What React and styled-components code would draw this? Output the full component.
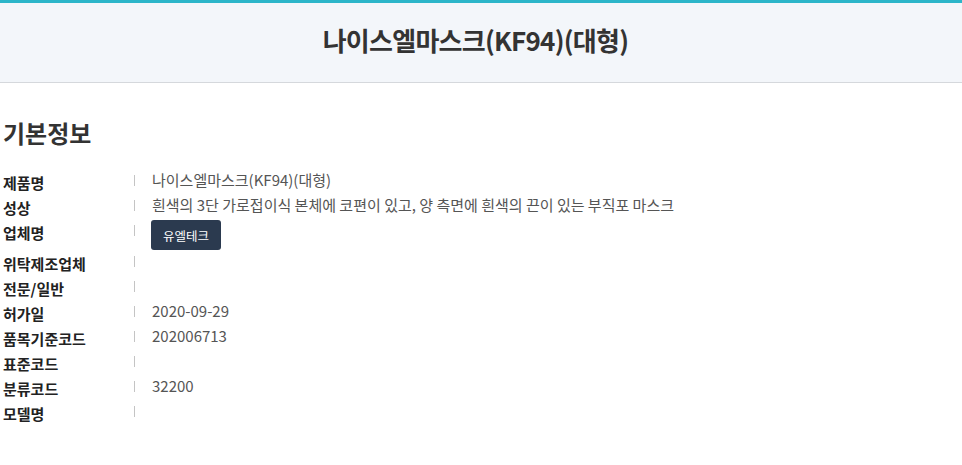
import React from "react"
import styled, { createGlobalStyle } from "styled-components"

const GlobalStyle = createGlobalStyle`
  body {
    margin: 0;
    background: #fff;
    font-family: "Noto Sans CJK KR", "Noto Sans", sans-serif;
    color: #333;
  }
`

const Header = styled.header`
  border-top: 3px solid #2cb5c9;
  border-bottom: 1px solid #d5d8dc;
  background: #f3f6fa;
  height: 78px;
  padding: 0 11px 1px 0;
  box-sizing: content-box;
  display: flex;
  align-items: center;
  justify-content: center;

  h1 {
    margin: 0 0 5px;
    font-size: 26px;
    font-weight: 700;
    letter-spacing: -0.75px;
    color: #333;
  }
`

const Content = styled.section`
  padding: 0 3px;

  h2 {
    margin: 33px 0 20px;
    font-size: 24px;
    font-weight: 700;
    color: #333;
    line-height: 34px;
  }
`

const Row = styled.div`
  display: flex;
  align-items: flex-start;
  height: ${p => (p.tall ? "31px" : "25px")};
`

const Label = styled.div`
  width: 131px;
  font-size: 15px;
  font-weight: 700;
  color: #222;
  line-height: 20px;
  padding-top: 3px;
`

const Sep = styled.span`
  width: 1px;
  height: 11px;
  margin-top: 5px;
  background: #c4c4c4;
`

const Value = styled.div`
  margin-left: 17px;
  font-size: 15px;
  color: #555;
  line-height: 20px;
`

const Company = styled.button`
  margin-left: 16px;
  height: 30px;
  padding: 0 12px;
  border: 0;
  border-radius: 3px;
  background: #2b3a4f;
  color: #fff;
  font-family: inherit;
  font-size: 12.5px;
  cursor: pointer;
`

const rows = [
  ["제품명", "나이스엘마스크(KF94)(대형)"],
  ["성상", "흰색의 3단 가로접이식 본체에 코편이 있고, 양 측면에 흰색의 끈이 있는 부직포 마스크"],
  ["업체명", null, "유엘테크"],
  ["위탁제조업체", ""],
  ["전문/일반", ""],
  ["허가일", "2020-09-29"],
  ["품목기준코드", "202006713"],
  ["표준코드", ""],
  ["분류코드", "32200"],
  ["모델명", ""],
]

export default function App() {
  return (
    <>
      <GlobalStyle />
      <Header>
        <h1>나이스엘마스크(KF94)(대형)</h1>
      </Header>
      <Content>
        <h2>기본정보</h2>
        {rows.map(([label, value, company]) => (
          <Row key={label} tall={!!company}>
            <Label>{label}</Label>
            <Sep />
            {company ? <Company>{company}</Company> : <Value>{value}</Value>}
          </Row>
        ))}
      </Content>
    </>
  )
}
